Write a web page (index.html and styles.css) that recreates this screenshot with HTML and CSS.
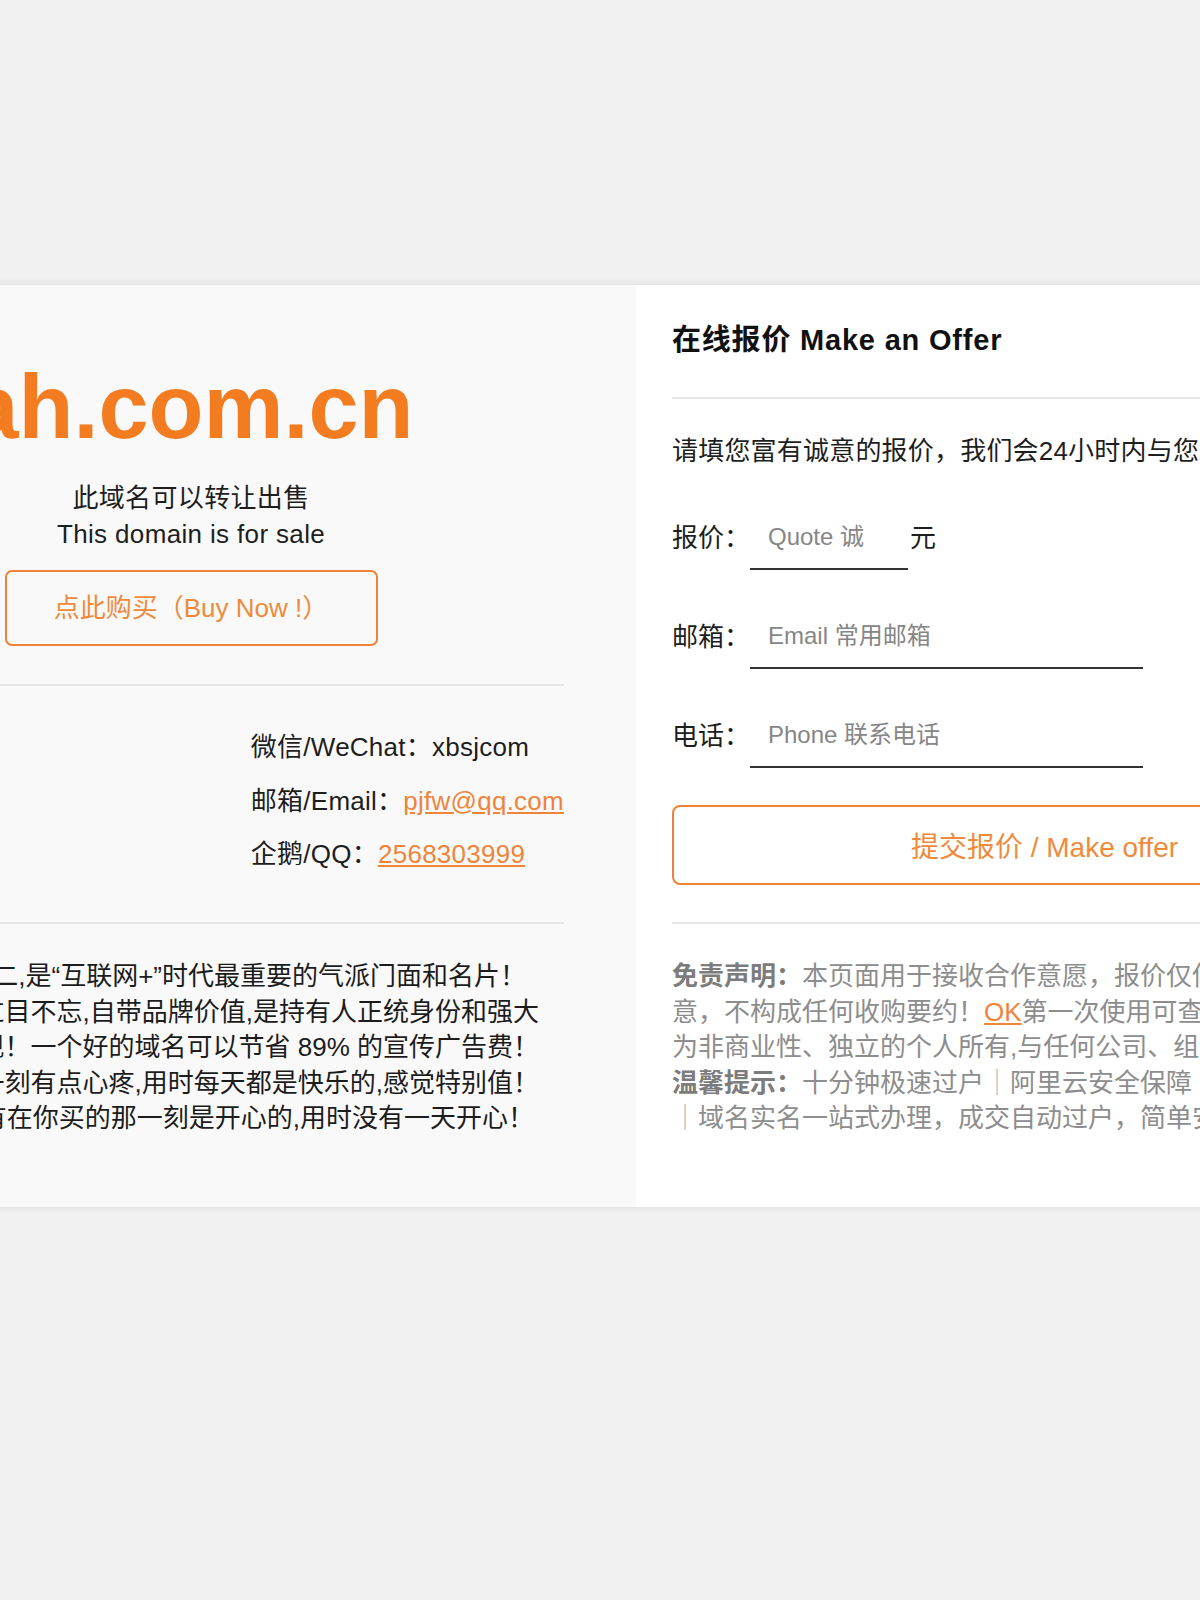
FILE: index.html
```html
<!DOCTYPE html>
<html lang="zh-CN">
<head>
<meta charset="utf-8">
<title>ah.com.cn 域名出售</title>
<link rel="stylesheet" href="styles.css">
</head>
<body>
<div class="page">
  <div class="card">
    <section class="sale">
      <h1 class="domain">ah.com.cn</h1>
      <p class="tagline">此域名可以转让出售<br>This domain is for sale</p>
      <a class="buy-btn" href="#">点此购买（Buy Now !）</a>
      <hr class="rule rule-top">
      <div class="contacts">
        <ul class="contact-list">
          <li>微信/WeChat：xbsjcom</li>
          <li>邮箱/Email：<a class="link" href="#">pjfw@qq.com</a></li>
          <li>企鹅/QQ：<a class="link" href="#">2568303999</a></li>
        </ul>
      </div>
      <hr class="rule rule-mid">
      <div class="pitch">
        <span class="ln ln-1">好域名独一无二,是“互联网+”时代最重要的气派门面和名片！</span>
        <span class="ln">好域名过目不忘,自带品牌价值,是持有人正统身份和强大</span>
        <span class="ln">实力的体现！一个好的域名可以节省 89% 的宣传广告费！</span>
        <span class="ln">好域名买的那一刻有点心疼,用时每天都是快乐的,感觉特别值！</span>
        <span class="ln ln-5">烂域名只有在你买的那一刻是开心的,用时没有一天开心！</span>
      </div>
    </section>

    <section class="offer">
      <h2 class="offer-title">在线报价 Make an Offer</h2>
      <hr class="rule rule-title">
      <p class="intro">请填您富有诚意的报价，我们会24小时内与您联系！</p>
      <form class="offer-form">
        <div class="row">
          <label class="label" for="quote">报价：</label>
          <input class="field field-quote" id="quote" type="text" placeholder="Quote 诚意报价">
          <span class="unit">元</span>
        </div>
        <div class="row">
          <label class="label" for="email">邮箱：</label>
          <input class="field field-wide" id="email" type="text" placeholder="Email 常用邮箱">
        </div>
        <div class="row">
          <label class="label" for="phone">电话：</label>
          <input class="field field-wide" id="phone" type="text" placeholder="Phone 联系电话">
        </div>
        <button class="submit-btn" type="button">提交报价 / Make offer</button>
      </form>
      <hr class="rule rule-mid">
      <div class="disclaimer">
        <span class="ln"><strong>免责声明：</strong>本页面用于接收合作意愿，报价仅供参考，表达购买意</span>
        <span class="ln">意，不构成任何收购要约！<a class="link" href="#">OK</a>第一次使用可查看详情，本站域名</span>
        <span class="ln">为非商业性、独立的个人所有,与任何公司、组织无关。</span>
        <span class="ln"><strong>温馨提示：</strong>十分钟极速过户<span class="sep">｜</span>阿里云安全保障</span>
        <span class="ln"><span class="sep">｜</span>域名实名一站式办理，成交自动过户，简单安全！</span>
      </div>
    </section>
  </div>
</div>
</body>
</html>
```

FILE: styles.css
```css
html, body {
  margin: 0;
  padding: 0;
  overflow: hidden;
}

body {
  width: 1200px;
  height: 1600px;
  background: #f0f0f0;
  font-family: "Liberation Sans", "Noto Sans CJK SC", sans-serif;
  color: #222;
  font-size: 26px;
}

.page {
  padding-top: 285px;
}

.card {
  display: flex;
  width: max-content;
  margin-left: -218px;
  box-shadow: 0 0 8px rgba(0, 0, 0, 0.09);
}

/* ---------- left: sale panel ---------- */
.sale {
  flex: none;
  width: 746px;
  padding: 72px 72px 70px 36px;
  background: #f9f9f9;
}

.domain {
  margin: 0;
  font-size: 90px;
  line-height: 100px;
  font-weight: bold;
  color: #f47c20;
  text-align: center;
}

.tagline {
  margin: 23px 0 0;
  font-size: 26px;
  line-height: 36px;
  letter-spacing: 0.35px;
  text-align: center;
  color: #1e1e1e;
}

.buy-btn {
  display: block;
  box-sizing: border-box;
  width: 373px;
  height: 76px;
  margin: 18px auto 0;
  border: 2px solid #ef8237;
  border-radius: 7px;
  color: #ef8a3d;
  font-size: 26px;
  line-height: 72px;
  text-align: center;
  text-decoration: none;
}

.rule {
  display: block;
  height: 2px;
  margin: 0;
  border: 0;
  background: #e6e6e6;
}

.rule-top {
  margin-top: 38px;
}

.rule-mid {
  margin-top: 50px;
}

.offer .rule-mid {
  margin-top: 37px;
}

.contacts {
  display: flex;
  justify-content: flex-end;
  margin-top: 43px;
}

.contact-list {
  display: flex;
  flex-direction: column;
  gap: 17.5px;
  margin: 0;
  padding: 0;
  list-style: none;
  font-size: 26px;
  line-height: 36px;
  letter-spacing: 0.25px;
  color: #1e1e1e;
}

.link {
  color: #f0843a;
  text-decoration: underline;
}

.pitch {
  display: flex;
  flex-direction: column;
  margin-top: 35px;
  padding-right: 25px;
  color: #1c1c1c;
}

.ln {
  display: block;
  white-space: nowrap;
  font-size: 26px;
  line-height: 35.5px;
}

.pitch .ln {
  text-align: right;
}

.pitch .ln-1 {
  padding-right: 13px;
}

.pitch .ln-5 {
  padding-right: 5px;
}

/* ---------- right: offer panel ---------- */
.offer {
  flex: none;
  width: 746px;
  padding: 35px 36px 70px 36px;
  background: #fff;
}

.offer-title {
  margin: 0;
  font-size: 29px;
  line-height: 40px;
  font-weight: bold;
  letter-spacing: 0.8px;
  color: #111;
  white-space: nowrap;
}

.rule-title {
  margin-top: 37px;
}

.intro {
  margin: 34px 0 0;
  font-size: 26px;
  line-height: 36px;
  letter-spacing: 0.2px;
  white-space: nowrap;
  color: #1e1e1e;
}

.offer-form {
  display: flex;
  flex-direction: column;
  gap: 35px;
  margin: 37px 0 0;
}

.row {
  display: flex;
  align-items: center;
  height: 64px;
}

.label {
  flex: none;
  width: 78px;
  font-size: 26px;
  line-height: 36px;
  color: #1e1e1e;
}

.field {
  box-sizing: border-box;
  height: 64px;
  margin: 0;
  padding: 0 18px;
  border: 0;
  border-bottom: 2px solid #333;
  border-radius: 0;
  background: transparent;
  font-family: "Liberation Sans", "Noto Sans CJK SC", sans-serif;
  font-size: 24px;
  color: #222;
  outline: none;
}

.field::placeholder {
  color: #868686;
}

.field-quote {
  width: 158px;
  padding-right: 43px;
}

.field-wide {
  width: 393px;
}

.unit {
  margin-left: 2px;
  font-size: 26px;
  line-height: 36px;
  color: #1e1e1e;
}

.submit-btn {
  box-sizing: border-box;
  width: 745px;
  height: 80px;
  margin-top: 2px;
  border: 2px solid #ef8237;
  border-radius: 8px;
  background: #fff;
  color: #ef8a3d;
  font-family: "Liberation Sans", "Noto Sans CJK SC", sans-serif;
  font-size: 28px;
  cursor: pointer;
}

.disclaimer {
  display: flex;
  flex-direction: column;
  margin-top: 35px;
  color: #8d8d8d;
}

.disclaimer strong {
  color: #7c7c7c;
  font-weight: bold;
}

.sep {
  color: #b5b5b5;
}
```
